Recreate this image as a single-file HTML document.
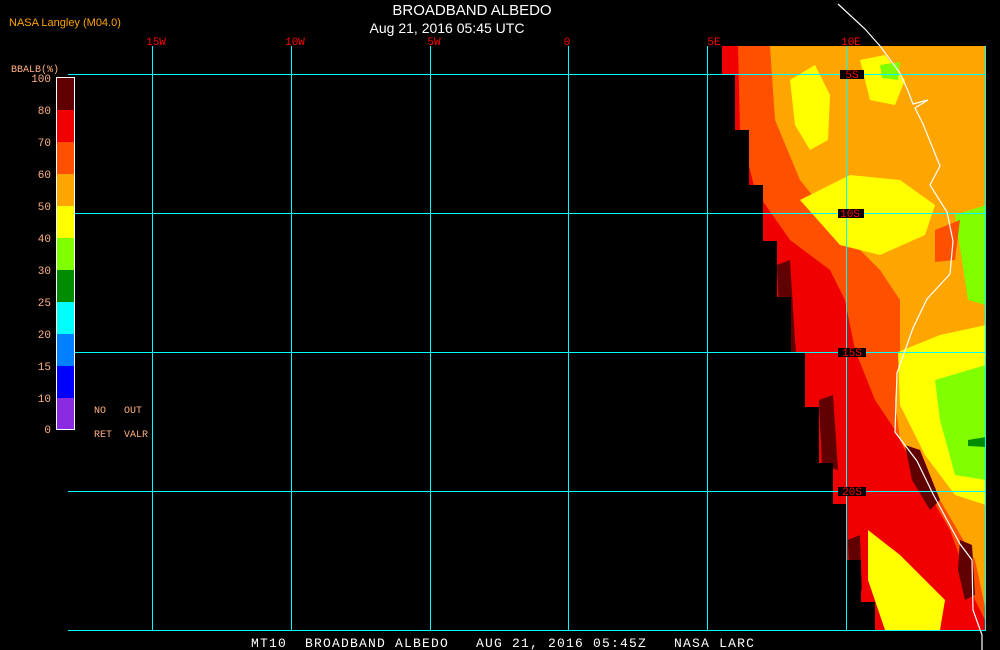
<!DOCTYPE html>
<html><head><meta charset="utf-8"><style>
html,body{margin:0;padding:0;background:#000;width:1000px;height:650px;overflow:hidden}
svg{display:block}
</style></head><body>
<svg width="1000" height="650" viewBox="0 0 1000 650" xmlns="http://www.w3.org/2000/svg">
<rect width="1000" height="650" fill="#000"/>
<defs>
<clipPath id="c">
<polygon points="722,46 986,46 986,630 875,630 875,602 861,602 861,560 847,560 847,504 833,504 833,463 819,463 819,407 805,407 805,353 791,353 791,297 777,297 777,241 763,241 763,185 749,185 749,130 735,130 735,75 722,75"/>
</clipPath>
</defs>
<g clip-path="url(#c)">
<rect x="700" y="40" width="300" height="600" fill="#ffa500"/>
<polygon fill="#ff5000" points="720,46 770,46 775,120 800,180 840,230 880,270 900,300 900,350 895,400 900,440 940,500 975,560 990,630 720,630"/>
<polygon fill="#f00000" points="720,46 738,46 740,130 755,190 790,240 830,270 845,300 855,350 875,400 895,430 915,470 950,530 975,600 990,630 720,630"/>
<polygon fill="#ffff00" points="790,80 815,65 830,95 828,140 810,150 795,125"/>
<polygon fill="#ffff00" points="800,200 850,175 900,180 935,205 925,235 880,255 840,245"/>
<polygon fill="#ffff00" points="860,60 885,55 905,80 895,105 870,100"/>
<polygon fill="#ffff00" points="898,352 940,335 986,325 986,505 955,495 925,455 900,405"/>
<polygon fill="#ffff00" points="868,530 900,555 945,600 940,630 885,630 868,580"/>
<polygon fill="#80ff00" points="955,215 986,205 986,305 968,300"/>
<polygon fill="#80ff00" points="935,380 986,365 986,480 955,475 940,420"/>
<polygon fill="#80ff00" points="880,65 900,62 898,80 882,78"/>
<polygon fill="#008c00" points="968,440 986,437 986,447 968,446"/>
<polygon fill="#600000" points="777,265 790,260 795,340 800,400 785,380 780,330"/>
<polygon fill="#600000" points="819,400 833,395 838,470 822,465"/>
<polygon fill="#600000" points="905,445 920,450 940,500 930,510 912,480"/>
<polygon fill="#600000" points="960,540 972,545 975,595 965,600 958,570"/>
<polygon fill="#600000" points="848,540 860,535 862,590 850,595"/>
<polygon fill="#ff5000" points="935,230 960,220 955,260 935,262"/>
</g>
<g stroke="#00ffff" stroke-width="1" shape-rendering="crispEdges">
<line x1="68" y1="74.5" x2="986" y2="74.5"/>
<line x1="68" y1="213.5" x2="986" y2="213.5"/>
<line x1="68" y1="352.5" x2="986" y2="352.5"/>
<line x1="68" y1="491.5" x2="986" y2="491.5"/>
<line x1="68" y1="630.5" x2="986" y2="630.5"/>
<line x1="152.5" y1="46" x2="152.5" y2="630"/>
<line x1="291.5" y1="46" x2="291.5" y2="630"/>
<line x1="430.5" y1="46" x2="430.5" y2="630"/>
<line x1="568.5" y1="46" x2="568.5" y2="630"/>
<line x1="707.5" y1="46" x2="707.5" y2="630"/>
<line x1="846.5" y1="46" x2="846.5" y2="630"/>
<line x1="985.5" y1="46" x2="985.5" y2="630"/>
</g>
<polyline fill="none" stroke="#fff" stroke-width="1.2" points="838,4 865,29 880,46 900,73 908,91 913,104 928,100 915,108 923,124 940,166 930,185 947,212 953,241 950,274 927,299 913,328 897,373 895,432 917,461 933,494 960,544 972,560 973,610 982,635 982,650"/>
<g font-family="Liberation Sans, sans-serif">
<text x="472" y="15" fill="#fff" font-size="15" text-anchor="middle">BROADBAND ALBEDO</text>
<text x="447" y="33" fill="#fff" font-size="14" text-anchor="middle">Aug 21, 2016 05:45 UTC</text>
<text x="9" y="26" fill="#ffa500" font-size="11">NASA Langley (M04.0)</text>
</g>
<g font-family="Liberation Mono, monospace" font-size="11" fill="#ff0000" text-anchor="middle">
<text x="156" y="45">15W</text>
<text x="295" y="45">10W</text>
<text x="434" y="45">5W</text>
<text x="567" y="45">0</text>
<text x="714" y="45">5E</text>
<text x="851" y="45">10E</text>
<rect x="840" y="70" width="24" height="9" fill="#000"/>
<text x="852" y="78">5S</text>
<rect x="838" y="209" width="26" height="9" fill="#000"/>
<text x="850" y="217">10S</text>
<rect x="838" y="348" width="28" height="9" fill="#000"/>
<text x="852" y="356">15S</text>
<rect x="838" y="487" width="28" height="9" fill="#000"/>
<text x="852" y="495">20S</text>
</g>
<rect x="56.5" y="77.5" width="18" height="352" fill="none" stroke="#fff"/>
<g shape-rendering="crispEdges">
<rect x="57" y="78" width="17" height="32" fill="#600000"/>
<rect x="57" y="110" width="17" height="32" fill="#f00000"/>
<rect x="57" y="142" width="17" height="32" fill="#ff5000"/>
<rect x="57" y="174" width="17" height="32" fill="#ffa500"/>
<rect x="57" y="206" width="17" height="32" fill="#ffff00"/>
<rect x="57" y="238" width="17" height="32" fill="#80ff00"/>
<rect x="57" y="270" width="17" height="32" fill="#008c00"/>
<rect x="57" y="302" width="17" height="32" fill="#00ffff"/>
<rect x="57" y="334" width="17" height="32" fill="#0080ff"/>
<rect x="57" y="366" width="17" height="32" fill="#0000ff"/>
<rect x="57" y="398" width="17" height="31" fill="#8a2be2"/>
</g>
<g font-family="Liberation Mono, monospace" font-size="11" fill="#ffb080" text-anchor="end">
<text x="51" y="82">100</text>
<text x="51" y="114">80</text>
<text x="51" y="146">70</text>
<text x="51" y="178">60</text>
<text x="51" y="210">50</text>
<text x="51" y="242">40</text>
<text x="51" y="274">30</text>
<text x="51" y="306">25</text>
<text x="51" y="338">20</text>
<text x="51" y="370">15</text>
<text x="51" y="402">10</text>
<text x="51" y="433">0</text>
</g>
<g font-family="Liberation Mono, monospace" font-size="10" fill="#ffb080">
<text x="11" y="72">BBALB(%)</text>
<text x="94" y="413">NO</text>
<text x="124" y="413">OUT</text>
<text x="94" y="437">RET</text>
<text x="124" y="437">VALR</text>
</g>
<text x="251" y="647" fill="#fff" font-family="Liberation Mono, monospace" font-size="13" letter-spacing="1.2" xml:space="preserve">MT10  BROADBAND ALBEDO   AUG 21, 2016 05:45Z   NASA LARC</text>
</svg>
</body></html>
